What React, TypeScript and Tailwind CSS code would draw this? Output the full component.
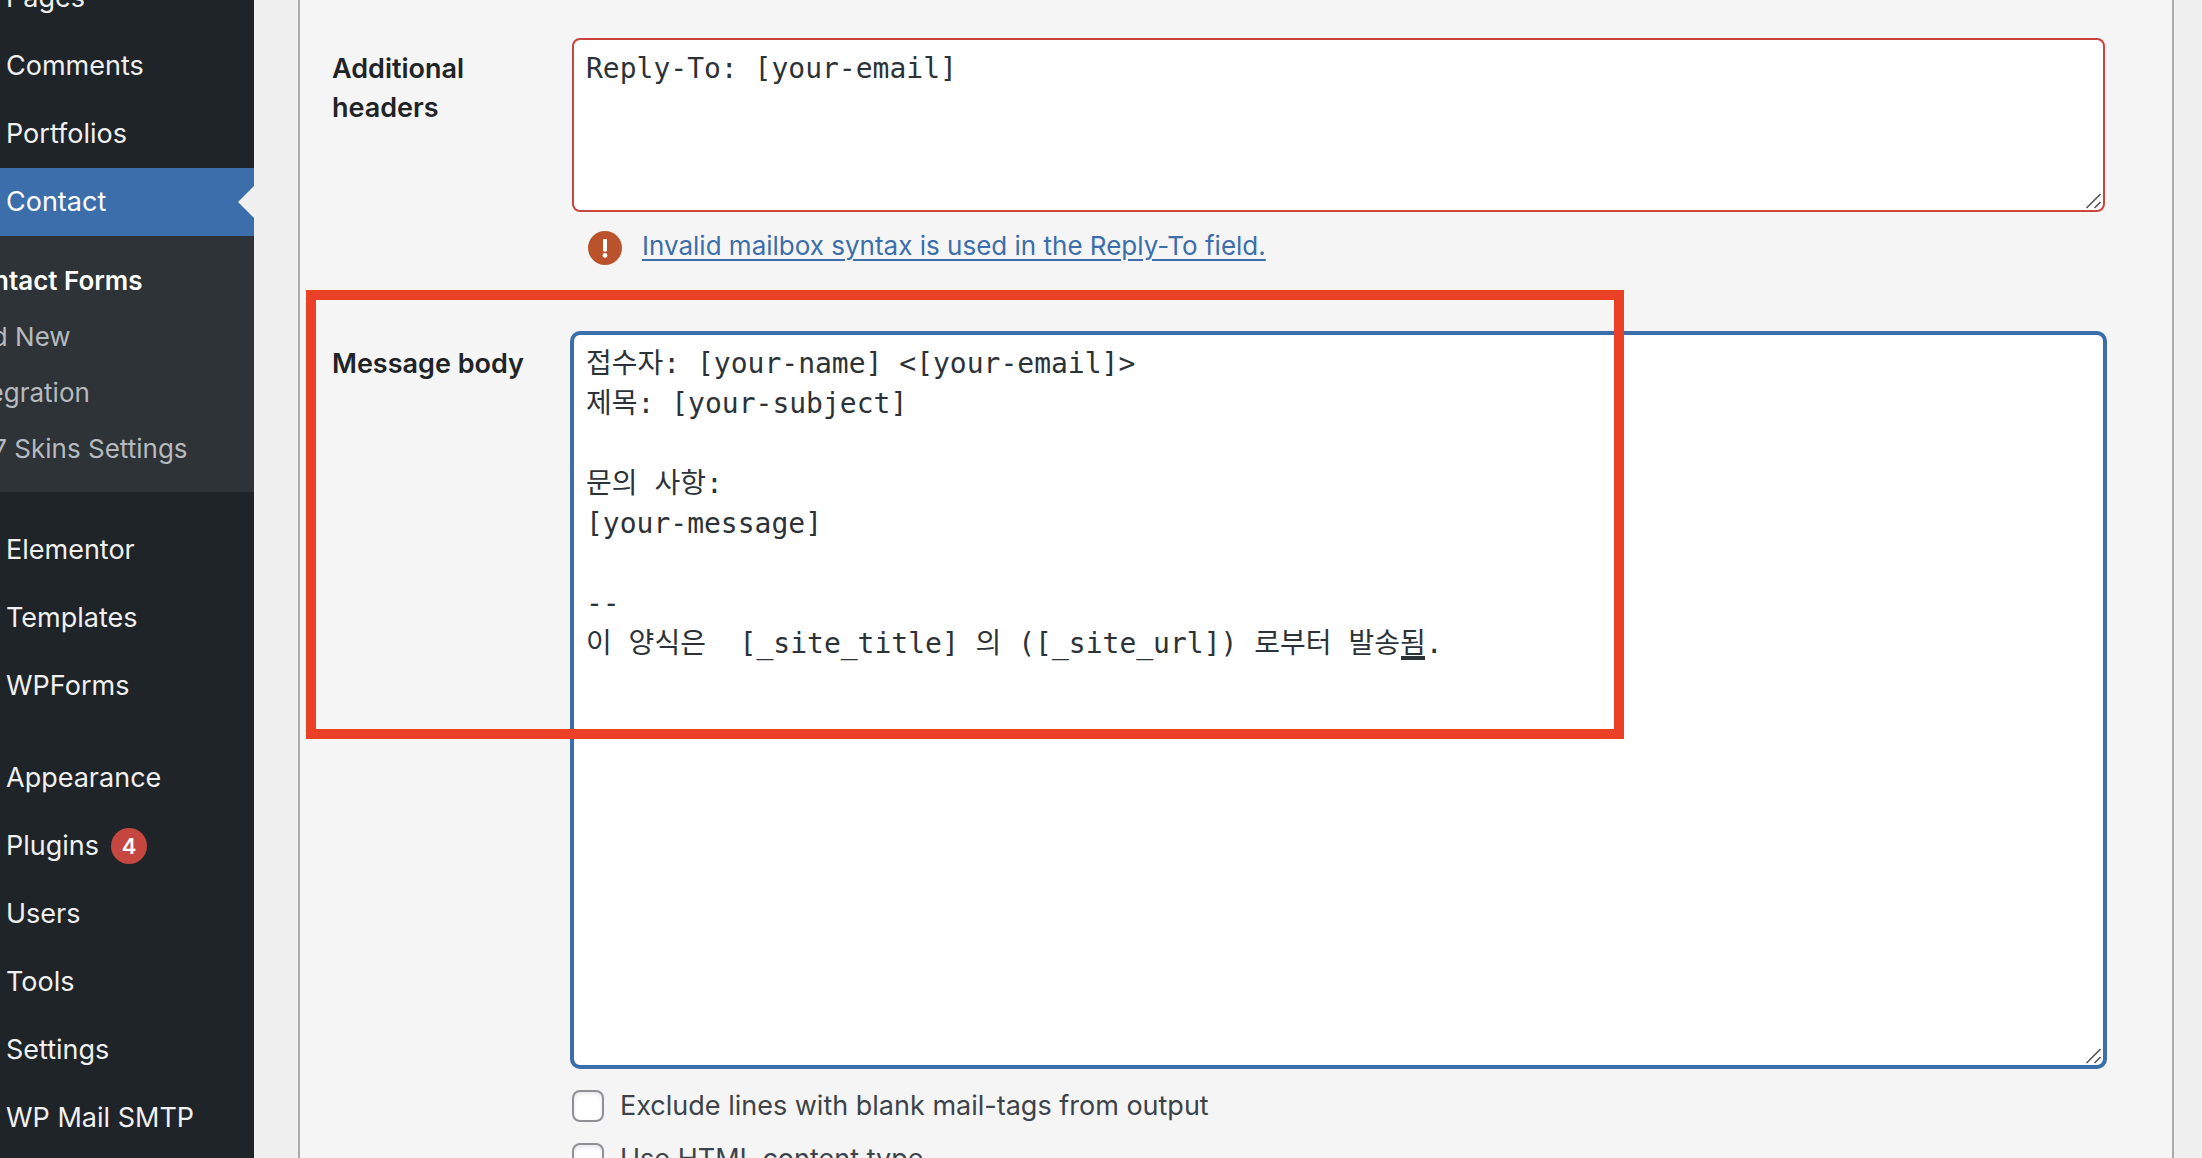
import React, { useState } from "react";

type MenuItem = { label: string; count?: number };

const topItems: MenuItem[] = [
  { label: "Pages" },
  { label: "Comments" },
  { label: "Portfolios" },
];

const contactItems = ["Contact Forms", "Add New", "Integration", "CF7 Skins Settings"];

const pluginItems: MenuItem[] = [
  { label: "Elementor" },
  { label: "Templates" },
  { label: "WPForms" },
];

const adminItems: MenuItem[] = [
  { label: "Appearance" },
  { label: "Plugins", count: 4 },
  { label: "Users" },
  { label: "Tools" },
  { label: "Settings" },
  { label: "WP Mail SMTP" },
];

const initialBody = [
  "접수자: [your-name] <[your-email]>",
  "제목: [your-subject]",
  "",
  "문의 사항:",
  "[your-message]",
  "",
  "--",
  "이 양식은  [_site_title] 의 ([_site_url]) 로부터 발송됨.",
].join("\n");

function MenuGroup({ items }: { items: MenuItem[] }) {
  return (
    <ul>
      {items.map((item) => (
        <li key={item.label}>
          <a href="#" className="flex h-[68px] items-center gap-3 pl-[72px] text-[#f0f0f1]">
            {item.label}
            {item.count !== undefined && (
              <span className="flex size-9 items-center justify-center rounded-full bg-[#c64640] text-[22px] font-semibold text-white">
                {item.count}
              </span>
            )}
          </a>
        </li>
      ))}
    </ul>
  );
}

function Sidebar() {
  return (
    <nav
      aria-label="Main menu"
      className="-mt-9 -ml-[66px] flex w-80 shrink-0 flex-col bg-[#1f2428] text-[27px] whitespace-nowrap"
    >
      <MenuGroup items={topItems} />
      <a
        href="#"
        className="relative flex h-[68px] items-center bg-[#3b6eab] pl-[72px] text-white"
      >
        Contact
        <svg
          className="absolute top-[18px] right-0 h-8 w-4 fill-[#f0f0f0]"
          viewBox="0 0 16 32"
          aria-hidden="true"
        >
          <path d="M16 0 0 16l16 16z" />
        </svg>
      </a>
      <ul className="mb-6 bg-[#2e3337] py-4 text-[26px]">
        {contactItems.map((label, index) => (
          <li key={label}>
            <a
              href="#"
              className={
                index === 0
                  ? "flex h-14 items-center pl-6 font-semibold text-white"
                  : "flex h-14 items-center pl-6 text-[#b6babe]"
              }
            >
              {label}
            </a>
          </li>
        ))}
      </ul>
      <MenuGroup items={pluginItems} />
      <div className="h-6" />
      <MenuGroup items={adminItems} />
    </nav>
  );
}

function ResizeGrip() {
  return (
    <svg
      className="pointer-events-none absolute right-1 bottom-[3px] size-4 stroke-[#55585c]"
      viewBox="0 0 16 16"
      fill="none"
      strokeWidth="1.6"
      aria-hidden="true"
    >
      <path d="M1.5 15 15.5 1M9.5 15l6-6" />
    </svg>
  );
}

function Field({
  id,
  label,
  children,
}: {
  id: string;
  label: string;
  children: React.ReactNode;
}) {
  return (
    <div className="relative flex">
      <div className="w-60 shrink-0 pt-[11px] pr-8">
        <label htmlFor={id} className="block text-[27px] leading-[39px] font-semibold text-[#1f2428]">
          {label}
        </label>
      </div>
      <div className="min-w-0 flex-1">{children}</div>
    </div>
  );
}

function CheckOption({ id, label }: { id: string; label: string }) {
  return (
    <div className="flex items-center gap-4">
      <input
        id={id}
        type="checkbox"
        className="size-8 shrink-0 appearance-none rounded-lg border-2 border-[#8f9096] bg-white shadow-[inset_0_2px_4px_rgba(0,0,0,0.1)] checked:bg-[#3b6eab]"
      />
      <label htmlFor={id} className="text-[27px] leading-8 text-[#3c434a]">
        {label}
      </label>
    </div>
  );
}

export default function App() {
  const [headers, setHeaders] = useState("Reply-To: [your-email]");
  const [body, setBody] = useState(initialBody);

  return (
    <div className="flex h-screen overflow-hidden bg-[#f0f0f0] font-['Inter','Noto_Sans_CJK_KR',sans-serif]">
      <Sidebar />
      <main className="mr-7 ml-11 flex min-w-0 flex-1 flex-col border-x-2 border-[#ababab] bg-[#f5f5f5] pt-[38px] pr-[67px] pl-8">
        <Field id="additional-headers" label="Additional headers">
          <div className="relative">
            <textarea
              id="additional-headers"
              rows={4}
              spellCheck={false}
              value={headers}
              onChange={(e) => setHeaders(e.target.value)}
              aria-invalid="true"
              aria-describedby="headers-error"
              className="block w-full resize-none overflow-hidden rounded-lg border-2 border-[#cb443d] bg-white px-3 pt-[9px] pb-px font-['DejaVu_Sans_Mono','Noto_Sans_CJK_KR',monospace] text-[28px] leading-10 text-[#2c3338] outline-none"
            />
            <ResizeGrip />
          </div>
          <p id="headers-error" className="mt-4 flex h-10 items-center gap-5 pl-4">
            <svg className="size-[34px] shrink-0" viewBox="0 0 34 34" aria-hidden="true">
              <circle cx="17" cy="17" r="17" fill="#ba532c" />
              <rect x="15" y="8" width="4" height="12.5" rx="1" fill="#fff" />
              <circle cx="17" cy="24.4" r="2.4" fill="#fff" />
            </svg>
            <a
              href="#"
              className="pb-1 text-[26px] leading-9 text-[#3b6eab] underline decoration-2 underline-offset-4"
            >
              Invalid mailbox syntax is used in the Reply-To field.
            </a>
          </p>
        </Field>

        <div className="h-[65px] shrink-0" />

        <Field id="message-body" label="Message body">
          <div className="relative">
            <textarea
              id="message-body"
              rows={18}
              spellCheck={false}
              value={body}
              onChange={(e) => setBody(e.target.value)}
              className="block w-full resize-none overflow-hidden rounded-lg border-2 border-[#3b6eab] bg-white px-3 pt-[9px] pb-px font-['DejaVu_Sans_Mono','Noto_Sans_CJK_KR',monospace] text-[28px] leading-10 text-[#2c3338] ring-2 ring-[#3b6eab] outline-none"
            />
            <span className="pointer-events-none absolute top-[323px] left-[829px] h-1 w-6 bg-[#2c3338]" />
            <ResizeGrip />
          </div>
          <div className="mt-[23px] flex flex-col gap-[21px]">
            <CheckOption id="exclude-blank" label="Exclude lines with blank mail-tags from output" />
            <CheckOption id="use-html" label="Use HTML content type" />
          </div>
          <div className="pointer-events-none absolute -top-[43px] -left-[26px] h-[449px] w-[1318px] border-10 border-[#ea4026]" />
        </Field>
      </main>
    </div>
  );
}
